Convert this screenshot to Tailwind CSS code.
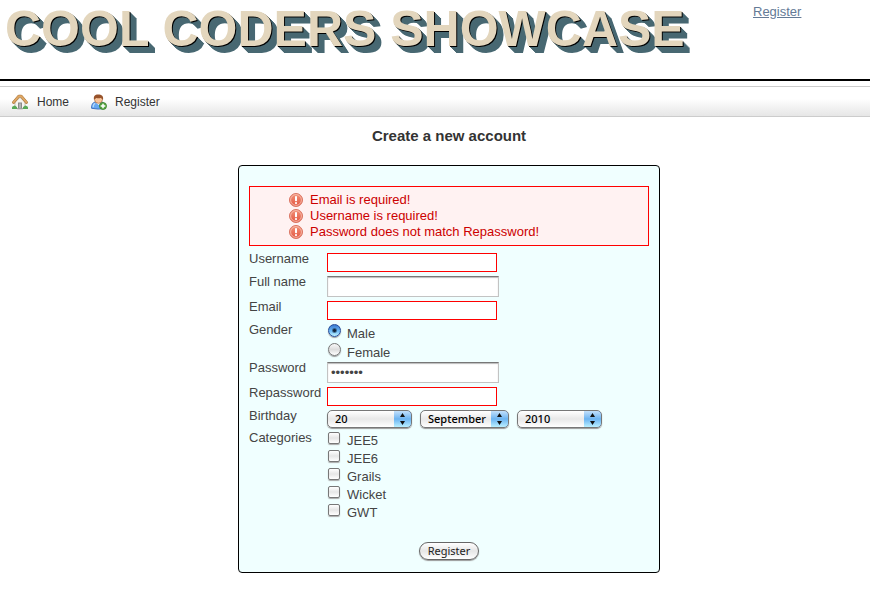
<!DOCTYPE html>
<html lang="en">
<head>
<meta charset="utf-8">
<meta name="viewport" content="width=device-width, initial-scale=1">
<title>Cool Coders Showcase</title>
<script src="https://cdn.jsdelivr.net/npm/@tailwindcss/browser@4"></script>
</head>
<body class="bg-white font-['Liberation_Sans',Arial,sans-serif] text-[13px] leading-4 text-[#444]">

<svg class="absolute size-0" aria-hidden="true">
  <defs>
    <linearGradient id="alert-fill" x1="0" y1="0" x2="0" y2="1">
      <stop offset="0" stop-color="#f3937a"/><stop offset="1" stop-color="#e25540"/>
    </linearGradient>
    <symbol id="alert" viewBox="0 0 14 14">
      <circle cx="7" cy="7" r="6.500" fill="url(#alert-fill)" stroke="#d97462"/>
      <circle cx="7" cy="7" r="5.400" fill="none" stroke="#f9c6b8" stroke-width=".8"/>
      <rect x="6" y="3" width="2" height="5.200" rx=".8" fill="#fff"/>
      <circle cx="7" cy="10.100" r="1.100" fill="#fff"/>
    </symbol>
    <symbol id="updown" viewBox="0 0 7 12">
      <path d="M3.500 0L6 4H1zM3.500 12L6 8H1z" fill="#111"/>
    </symbol>
  </defs>
</svg>

<header class="flex h-[81px] items-start border-b-2 border-black pl-[5px]">
  <h1 class="mt-px w-[748px] shrink-0 whitespace-nowrap text-[50px] leading-[56px] font-bold text-[#e3d6bd] [text-shadow:1px_1px_0_#000,2px_2px_0_#486872,3px_3px_0_#486872,4px_4px_0_#486872,5px_5px_0_#486872,6px_6px_0_#486872,7px_7px_0_#486872]">COOL CODERS SHOWCASE</h1>
  <a href="#register" class="mt-1 text-[#647a96] underline">Register</a>
</header>

<nav class="mt-[5px] flex h-[31px] items-center gap-[22px] border-y border-[#ccc] bg-linear-to-b from-white from-40% to-[#e6e6e6] px-3 text-xs text-[#333]">
  <a href="#home" class="flex items-center gap-[9px]">
    <svg class="size-4" viewBox="0 0 16 16" aria-hidden="true">
      <path d="M3 8L8 3.500l5 4.500V14.500H3z" fill="#f6f4f0" stroke="#b3aea4" stroke-width=".7"/>
      <path d="M6 14.500V8.500h4v6z" fill="#8a8a8a"/><path d="M7 14.500V9.500h2v5z" fill="#b4b4b4"/>
      <path d="M1.500 8.500L6.800 2.200h2.400l5.300 6.300" fill="none" stroke="#a87538" stroke-width="2.800" stroke-linecap="round" stroke-linejoin="round"/>
      <path d="M1.500 8.300L6.800 2.100h2.400L14.500 8.300" fill="none" stroke="#dfa765" stroke-width="1.800" stroke-linecap="round" stroke-linejoin="round"/>
      <path d="M0 15q-.3-3 1.600-3 1.200-1.300 2.200.2 1.700.3 1.400 2.800zM10.800 15q-.3-2.500 1.500-2.800 1-1.500 2.200-.2 1.800.2 1.500 3z" fill="#57a957"/>
      <path d="M5.200 14.800h5.600" stroke="#999"/>
    </svg>
    <span>Home</span>
  </a>
  <a href="#register" class="flex items-center gap-2">
    <svg class="size-4" viewBox="0 0 16 16" aria-hidden="true">
      <path d="M.6 14.300c-.2-3.900 1.400-6.300 4.400-6.300h5c2.700 0 4 2 4 6.300q-6.500 1.600-13.400 0z" fill="#66a8f2" stroke="#3468bb" stroke-width=".9"/>
      <path d="M2.200 13.200c0-2.300.7-3.500 2-3.800" fill="none" stroke="#b5d8fb" stroke-width="1.300"/>
      <path d="M5 8.500h5L7.600 11z" fill="#fff"/>
      <ellipse cx="7.500" cy="5.400" rx="4" ry="3.900" fill="#f8c49a" stroke="#a66b43" stroke-width=".7"/>
      <path d="M3 5.700C2.300 1.900 4 .4 7 .4c3.800 0 5.700 1.700 5 5.300-1.200-.4-1.600-1.300-1.800-2-2 .8-4 .6-5 .2-.4.500-1.300 1.100-2.200 1.800z" fill="#97522a"/>
      <circle cx="12" cy="12" r="3.500" fill="#5da844" stroke="#347f27" stroke-width=".8"/>
      <path d="M12 9.700v4.600M9.700 12h4.600" stroke="#fff" stroke-width="1.500"/>
    </svg>
    <span>Register</span>
  </a>
</nav>

<main class="flex flex-col items-center pt-[10px] pl-7">
  <h2 class="text-[15px] leading-[18px] font-bold text-[#333]">Create a new account</h2>

  <form id="register" novalidate onsubmit="return false" class="mt-5 w-full max-w-[422px] rounded border border-black bg-[#f0ffff] px-[10px] pt-5 pb-3">
    <ul role="alert" class="border border-[#f00] bg-[#fff2f2] py-[5px] pl-[39px] text-[#c00]">
      <li class="flex items-center gap-[7px]"><svg class="size-[14px]" aria-hidden="true"><use href="#alert"/></svg>Email is required!</li>
      <li class="flex items-center gap-[7px]"><svg class="size-[14px]" aria-hidden="true"><use href="#alert"/></svg>Username is required!</li>
      <li class="flex items-center gap-[7px]"><svg class="size-[14px]" aria-hidden="true"><use href="#alert"/></svg>Password does not match Repassword!</li>
    </ul>

    <div class="mt-[5px] grid grid-cols-[78px_1fr] items-start">
      <label for="username">Username</label>
      <div class="flex py-[2px]"><input id="username" type="text" aria-invalid="true" class="h-[19px] w-[170px] border border-[#f00] bg-white px-1 outline-none"></div>

      <label for="fullname">Full name</label>
      <div class="flex py-[2px]"><input id="fullname" type="text" class="h-[21px] w-[172px] border border-[#c3c3c3] border-t-[#777] bg-white px-1 shadow-[inset_0_1px_1px_#bbb] outline-none"></div>

      <label for="email">Email</label>
      <div class="flex py-[2px]"><input id="email" type="email" aria-invalid="true" class="h-[19px] w-[170px] border border-[#f00] bg-white px-1 outline-none"></div>

      <span id="gender">Gender</span>
      <div role="radiogroup" aria-labelledby="gender">
        <label class="flex h-[19px] gap-[6px]"><input type="radio" name="gender" checked class="mt-[2px] ml-px size-[13px] appearance-none rounded-full border border-[#777] bg-linear-to-b from-[#f8f8f8] via-[#ddd] to-white shadow-[0_1px_1px_#999] checked:border-[#234a99] checked:bg-[radial-gradient(circle,#10243c_1px,transparent_3px),linear-gradient(#3a78cf,#6cbaf6_55%,#c0f4ff)]"><span class="pt-1">Male</span></label>
        <label class="flex h-[19px] gap-[6px]"><input type="radio" name="gender" class="mt-[2px] ml-px size-[13px] appearance-none rounded-full border border-[#777] bg-linear-to-b from-[#f8f8f8] via-[#ddd] to-white shadow-[0_1px_1px_#999] checked:border-[#234a99] checked:bg-[radial-gradient(circle,#10243c_1px,transparent_3px),linear-gradient(#3a78cf,#6cbaf6_55%,#c0f4ff)]"><span class="pt-1">Female</span></label>
      </div>

      <label for="password">Password</label>
      <div class="flex py-[2px]"><input id="password" type="password" value="showcas" class="h-[21px] w-[172px] border border-[#c3c3c3] border-t-[#777] bg-white px-[3px] text-[13px] text-[#444] shadow-[inset_0_1px_1px_#bbb] outline-none"></div>

      <label for="repassword">Repassword</label>
      <div class="flex py-[2px]"><input id="repassword" type="password" aria-invalid="true" class="h-[19px] w-[170px] border border-[#f00] bg-white px-1 outline-none"></div>

      <span id="birthday">Birthday</span>
      <div role="group" aria-labelledby="birthday" class="flex gap-2 py-[2px] font-['Noto_Sans',sans-serif] text-[11px] font-medium text-black">
        <div class="relative h-[18px] w-[85px] overflow-hidden rounded-[5px] border border-[#777] bg-linear-to-b from-white via-[#e8e8e8] to-white shadow-[0_1px_1px_#999]">
          <select aria-label="Day" class="block h-4 w-full appearance-none pl-[7px] leading-4 outline-none"><option>20</option></select>
          <span class="pointer-events-none absolute -inset-y-px -right-px flex w-[18px] items-center justify-center rounded-r-[5px] border border-l-0 border-[#27569d] bg-linear-to-b from-[#c2e0fb] via-[#6bb3f1] to-[#baf0ff]"><svg class="h-3 w-[7px]" aria-hidden="true"><use href="#updown"/></svg></span>
        </div>
        <div class="relative h-[18px] w-[89px] overflow-hidden rounded-[5px] border border-[#777] bg-linear-to-b from-white via-[#e8e8e8] to-white shadow-[0_1px_1px_#999]">
          <select aria-label="Month" class="block h-4 w-full appearance-none pl-[7px] leading-4 outline-none"><option>September</option></select>
          <span class="pointer-events-none absolute -inset-y-px -right-px flex w-[18px] items-center justify-center rounded-r-[5px] border border-l-0 border-[#27569d] bg-linear-to-b from-[#c2e0fb] via-[#6bb3f1] to-[#baf0ff]"><svg class="h-3 w-[7px]" aria-hidden="true"><use href="#updown"/></svg></span>
        </div>
        <div class="relative h-[18px] w-[85px] overflow-hidden rounded-[5px] border border-[#777] bg-linear-to-b from-white via-[#e8e8e8] to-white shadow-[0_1px_1px_#999]">
          <select aria-label="Year" class="block h-4 w-full appearance-none pl-[7px] leading-4 outline-none"><option>2010</option></select>
          <span class="pointer-events-none absolute -inset-y-px -right-px flex w-[18px] items-center justify-center rounded-r-[5px] border border-l-0 border-[#27569d] bg-linear-to-b from-[#c2e0fb] via-[#6bb3f1] to-[#baf0ff]"><svg class="h-3 w-[7px]" aria-hidden="true"><use href="#updown"/></svg></span>
        </div>
      </div>

      <span id="categories">Categories</span>
      <div role="group" aria-labelledby="categories">
        <label class="flex h-[18px] gap-[7px]"><input type="checkbox" class="mt-[2px] ml-px size-3 appearance-none rounded-[2px] border border-[#777] bg-linear-to-b from-white via-[#e6e6e6] to-white shadow-[0_1px_1px_#aaa] checked:bg-[#5fb0f2]"><span class="pt-[3px]">JEE5</span></label>
        <label class="flex h-[18px] gap-[7px]"><input type="checkbox" class="mt-[2px] ml-px size-3 appearance-none rounded-[2px] border border-[#777] bg-linear-to-b from-white via-[#e6e6e6] to-white shadow-[0_1px_1px_#aaa] checked:bg-[#5fb0f2]"><span class="pt-[3px]">JEE6</span></label>
        <label class="flex h-[18px] gap-[7px]"><input type="checkbox" class="mt-[2px] ml-px size-3 appearance-none rounded-[2px] border border-[#777] bg-linear-to-b from-white via-[#e6e6e6] to-white shadow-[0_1px_1px_#aaa] checked:bg-[#5fb0f2]"><span class="pt-[3px]">Grails</span></label>
        <label class="flex h-[18px] gap-[7px]"><input type="checkbox" class="mt-[2px] ml-px size-3 appearance-none rounded-[2px] border border-[#777] bg-linear-to-b from-white via-[#e6e6e6] to-white shadow-[0_1px_1px_#aaa] checked:bg-[#5fb0f2]"><span class="pt-[3px]">Wicket</span></label>
        <label class="flex h-[18px] gap-[7px]"><input type="checkbox" class="mt-[2px] ml-px size-3 appearance-none rounded-[2px] border border-[#777] bg-linear-to-b from-white via-[#e6e6e6] to-white shadow-[0_1px_1px_#aaa] checked:bg-[#5fb0f2]"><span class="pt-[3px]">GWT</span></label>
      </div>
    </div>

    <div class="mt-[22px] flex justify-center">
      <button type="submit" class="h-[18px] rounded-full border border-[#666] bg-linear-to-b from-white via-[#e6e6e6] to-white px-2 font-['Noto_Sans',sans-serif] text-[11px] leading-4 text-[#222] shadow-[0_1px_1px_#999]">Register</button>
    </div>
  </form>
</main>
</body>
</html>
